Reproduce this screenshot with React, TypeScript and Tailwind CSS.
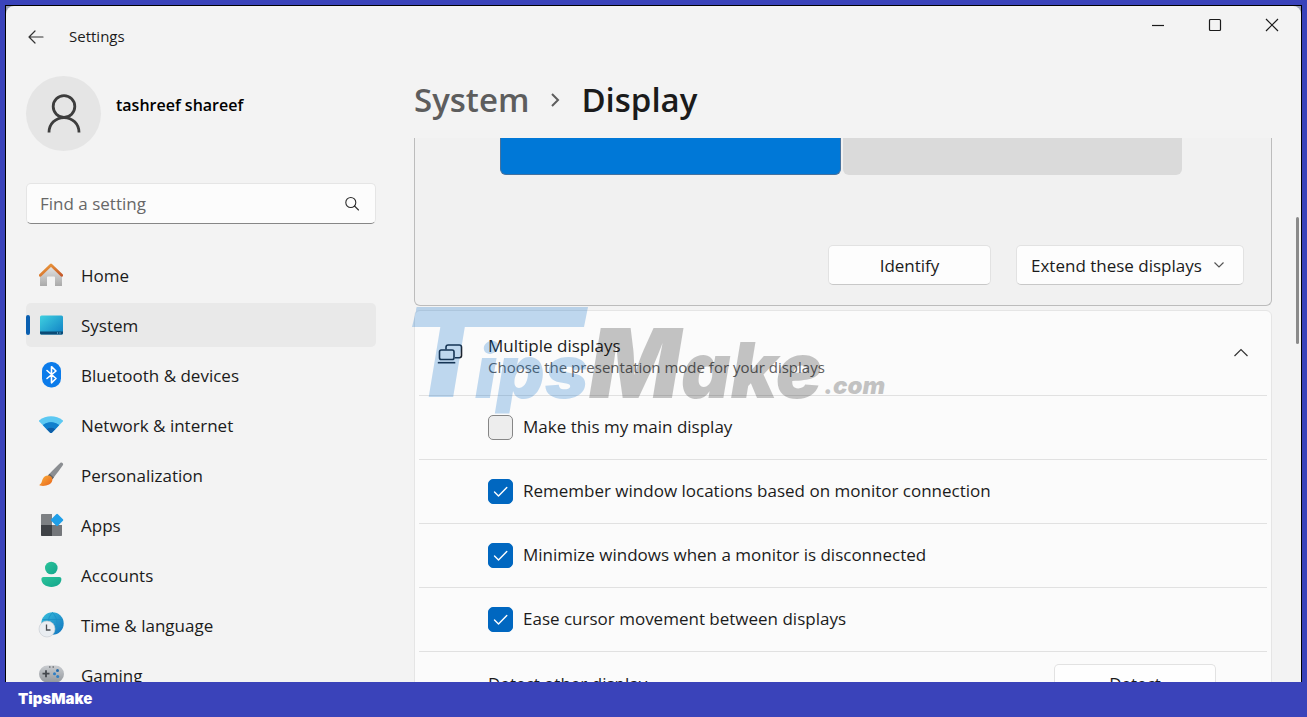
import React, { useState } from 'react';

interface NavItem {
  label: string;
  icon: React.ReactNode;
}

const HomeIcon = () => (
  <svg viewBox="0 0 24 24" className="h-6 w-6 shrink-0" aria-hidden="true">
    <defs>
      <linearGradient id="home-wall" x1="0" y1="0" x2="0" y2="1">
        <stop offset="0" stopColor="#e4e4e4" />
        <stop offset="1" stopColor="#a9a9a9" />
      </linearGradient>
      <linearGradient id="home-roof" x1="0" y1="0" x2="1" y2="1">
        <stop offset="0" stopColor="#f0a03c" />
        <stop offset="1" stopColor="#c5592a" />
      </linearGradient>
    </defs>
    <path d="M12 3.5 1 13v9.4c0 .4.2.6.6.6H8v-8.5c0-.6.3-.9.9-.9h6.2c.6 0 .9.3.9.9V23h6.4c.4 0 .6-.2.6-.6V13z" fill="url(#home-wall)" />
    <path d="M1.300 12.300 12 2l10.700 10.300" fill="none" stroke="url(#home-roof)" strokeWidth="2.800" strokeLinecap="round" strokeLinejoin="round" />
  </svg>
);

const SystemIcon = () => (
  <svg viewBox="0 0 24 24" className="h-6 w-6 shrink-0" aria-hidden="true">
    <defs>
      <linearGradient id="sys-screen" x1="0" y1="0" x2="1" y2="1">
        <stop offset="0" stopColor="#3fd0e0" />
        <stop offset="1" stopColor="#0f7fc4" />
      </linearGradient>
    </defs>
    <rect x="1" y="2.5" width="23" height="19" rx="1.5" fill="url(#sys-screen)" />
    <path d="M1 18.500h23V20c0 .9-.6 1.500-1.500 1.500h-20C1.600 21.500 1 20.900 1 20z" fill="#0b4a75" />
    <path d="M18 19.500h1v1h-1zM20.500 19.500h1v1h-1z" fill="#8fd3f0" />
  </svg>
);

const BluetoothIcon = () => (
  <svg viewBox="0 0 24 24" className="h-6 w-6 shrink-0 overflow-visible" aria-hidden="true">
    <rect x="3" y="-1" width="19" height="25.5" rx="9" fill="#0b7bea" />
    <path d="m8 7.500 9 8-4.500 4.300V3.700L17 8l-9 7.500" fill="none" stroke="#fff" strokeWidth="1.6" strokeLinejoin="round" strokeLinecap="round" />
  </svg>
);

const NetworkIcon = () => (
  <svg viewBox="0 0 24 24" className="h-6 w-6 shrink-0" aria-hidden="true">
    <path d="M.3 7.300C6.800 1.800 17.200 1.800 23.700 7.300c.4.4.4.8.1 1.200l-11 11.200c-.5.5-1.100.5-1.600 0L.2 8.500c-.3-.4-.3-.8.1-1.200z" fill="#5cc8f2" />
    <path d="M3.800 12.200c4.800-4 11.600-4 16.400 0l-7.400 7.500c-.5.5-1.100.5-1.600 0z" fill="#1b8ad3" />
    <path d="M7.500 16c2.700-2.100 6.300-2.100 9 0l-3.700 3.700c-.5.5-1.100.5-1.600 0z" fill="#0d5ea8" />
    <path d="M4.200 11.800c4.600-3.500 11-3.500 15.600 0L16.500 16c-2.700-2.100-6.300-2.100-9 0z" fill="#1180cd" />
  </svg>
);

const BrushIcon = () => (
  <svg viewBox="0 0 24 24" className="h-6 w-6 shrink-0 overflow-visible" aria-hidden="true">
    <defs>
      <linearGradient id="brush-tip" x1="0" y1="0" x2="1" y2="1">
        <stop offset="0" stopColor="#fbb03b" />
        <stop offset="1" stopColor="#e8641b" />
      </linearGradient>
    </defs>
    <path d="M21.500-.2c1.200-.8 3.100.6 2.600 2-.3.900-8.700 12-10.700 14.400L9 12.400C11.200 10 20.300.6 21.500-.2z" fill="#8b8e92" />
    <path d="m10.600 10.700 4.200 3.700-1.400 1.800L9 12.400z" fill="#5f6266" />
    <path d="M8.800 12.500c2.500-.2 5 2 4.600 4.500-.8 5-7.500 6.700-12.400 5.600-.6-.1-.7-.8-.2-1.100 2-1.100 1.900-3 2.800-5.200.9-2.300 2.900-3.600 5.200-3.800z" fill="url(#brush-tip)" />
  </svg>
);

const AppsIcon = () => (
  <svg viewBox="0 0 24 24" className="h-6 w-6 shrink-0 overflow-visible" aria-hidden="true">
    <path d="M2 2.200C2 1.500 2.300 1 3 1h10v11H2z" fill="#7d8083" />
    <path d="M2 12h11v11H3c-.7 0-1-.4-1-1z" fill="#3f4246" />
    <path d="M13 12h10v10c0 .6-.3 1-1 1h-9z" fill="#74777b" />
    <rect x="13.3" y="2.2" width="9.5" height="9.5" rx="1.2" transform="rotate(45 18 7)" fill="#1f9fe8" />
  </svg>
);

const AccountsIcon = () => (
  <svg viewBox="0 0 24 24" className="h-6 w-6 shrink-0 overflow-visible" aria-hidden="true">
    <defs>
      <linearGradient id="acc-green" x1="0" y1="0" x2="1" y2="1">
        <stop offset="0" stopColor="#2cc49a" />
        <stop offset="1" stopColor="#12a58c" />
      </linearGradient>
    </defs>
    <circle cx="12.3" cy="5" r="6.3" fill="url(#acc-green)" />
    <path d="M4.500 14h15.800c1.200 0 2.100.9 2.100 2.100 0 5-4.400 7.900-10 7.900s-10-2.900-10-7.900c0-1.200.9-2.100 2.100-2.100z" fill="url(#acc-green)" />
  </svg>
);

const TimeIcon = () => (
  <svg viewBox="0 0 24 24" className="h-6 w-6 shrink-0 overflow-visible" aria-hidden="true">
    <defs>
      <linearGradient id="time-globe" x1="0" y1="0" x2="1" y2="1">
        <stop offset="0" stopColor="#38c0dc" />
        <stop offset="1" stopColor="#1272bf" />
      </linearGradient>
    </defs>
    <circle cx="13.5" cy="10.5" r="11.2" fill="url(#time-globe)" />
    <path d="M3.500 6.500h20M3 13.500h21M13.500-.5c-6 6-6 16 0 22M13.500-.5c6 6 6 16 0 22" fill="none" stroke="#1b8fc4" strokeWidth=".8" />
    <circle cx="8" cy="16" r="8" fill="#e9edf1" stroke="#c5cad0" strokeWidth=".6" />
    <path d="M7.500 11.500v5.500h4" fill="none" stroke="#4a4d52" strokeWidth="1.3" />
  </svg>
);

const GamingIcon = () => (
  <svg viewBox="0 0 24 24" className="h-6 w-6 shrink-0 overflow-visible" aria-hidden="true">
    <defs>
      <linearGradient id="pad" x1="0" y1="0" x2="0" y2="1">
        <stop offset="0" stopColor="#c9ccd0" />
        <stop offset="1" stopColor="#94989d" />
      </linearGradient>
    </defs>
    <rect x="0" y="2.5" width="25" height="17" rx="8.5" fill="url(#pad)" />
    <path d="M7 7.200v7M3.500 10.700h7" stroke="#44484d" strokeWidth="1.8" />
    <circle cx="18.5" cy="7.500" r="1.5" fill="#2369a8" />
    <circle cx="15.5" cy="10.700" r="1.5" fill="#2f7fc4" />
    <circle cx="18.7" cy="13.500" r="1.5" fill="#2f7fc4" />
    <path d="M10 4h1.500M13.500 4H15" stroke="#44484d" strokeWidth="1.2" />
  </svg>
);

const navItems: NavItem[] = [
  { label: 'Home', icon: <HomeIcon /> },
  { label: 'System', icon: <SystemIcon /> },
  { label: 'Bluetooth & devices', icon: <BluetoothIcon /> },
  { label: 'Network & internet', icon: <NetworkIcon /> },
  { label: 'Personalization', icon: <BrushIcon /> },
  { label: 'Apps', icon: <AppsIcon /> },
  { label: 'Accounts', icon: <AccountsIcon /> },
  { label: 'Time & language', icon: <TimeIcon /> },
  { label: 'Gaming', icon: <GamingIcon /> },
];

const displayOptions = [
  { id: 'main-display', label: 'Make this my main display', checked: false },
  { id: 'remember', label: 'Remember window locations based on monitor connection', checked: true },
  { id: 'minimize', label: 'Minimize windows when a monitor is disconnected', checked: true },
  { id: 'ease-cursor', label: 'Ease cursor movement between displays', checked: true },
];

const TitleBar: React.FC = () => (
  <header className="flex shrink-0 items-start justify-between">
    <div className="flex h-[62px] items-center gap-6 pl-[21px]">
      <button type="button" aria-label="Back" className="text-[#333]">
        <svg viewBox="0 0 18 18" className="h-[18px] w-[18px]" fill="none" stroke="currentColor" strokeWidth="1.2">
          <path d="M16 9H2M8 3 2 9l6 6" strokeLinecap="round" strokeLinejoin="round" />
        </svg>
      </button>
      <span className="pb-[2px] text-[15px]">Settings</span>
    </div>
    <div className="flex h-[38px] pr-px text-[#1a1a1a]">
      <button type="button" aria-label="Minimize" className="flex w-[57px] items-center justify-center">
        <svg viewBox="0 0 14 14" className="h-[14px] w-[14px]" stroke="currentColor" strokeWidth="1.2">
          <path d="M1 7.500h12" />
        </svg>
      </button>
      <button type="button" aria-label="Maximize" className="flex w-[57px] items-center justify-center">
        <svg viewBox="0 0 14 14" className="h-[14px] w-[14px]" fill="none" stroke="currentColor" strokeWidth="1.2">
          <rect x="1.5" y="1.5" width="11" height="11" rx="1" />
        </svg>
      </button>
      <button type="button" aria-label="Close" className="flex w-[57px] items-center justify-center">
        <svg viewBox="0 0 14 14" className="h-[14px] w-[14px]" stroke="currentColor" strokeWidth="1.2">
          <path d="m1 1 12 12M13 1 1 13" />
        </svg>
      </button>
    </div>
  </header>
);

const Sidebar: React.FC = () => (
  <aside className="w-[370px] shrink-0 overflow-hidden pt-2 pl-5">
    <div className="flex items-start gap-[15px]">
      <div className="flex h-[75px] w-[75px] items-center justify-center rounded-full bg-[#e5e5e5]">
        <svg viewBox="0 0 36 40" className="h-10 w-9" fill="none" stroke="#3d3d3d" strokeWidth="2.8" aria-hidden="true">
          <circle cx="18" cy="12.500" r="10.800" />
          <path d="M3 38.500C3 30 9.500 23.600 18 23.600s15 6.400 15 14.900" />
        </svg>
      </div>
      <p className="mt-4 text-[16px] leading-[26px] font-semibold text-black">tashreef shareef</p>
    </div>

    <div className="mt-8 flex h-[41px] items-center rounded-[5px] border border-[#e5e5e5] border-b-[#868686] bg-[#fcfcfc] pr-[15px] pl-[13px]">
      <input
        type="text"
        aria-label="Find a setting"
        placeholder="Find a setting"
        className="min-w-0 flex-1 bg-transparent text-[17px] outline-none placeholder:text-[#676767]"
      />
      <svg viewBox="0 0 16 16" className="h-4 w-4" fill="none" stroke="#2b2b2b" strokeWidth="1.1" aria-hidden="true">
        <circle cx="6.8" cy="6.500" r="5" />
        <path d="m10.500 10 4 4" strokeLinecap="round" />
      </svg>
    </div>

    <nav className="mt-[29px] flex flex-col gap-[6px]">
      {navItems.map((item) => (
        <a
          key={item.label}
          href="#"
          className={
            item.label === 'System'
              ? 'relative flex h-11 items-center gap-[18px] rounded-[5px] bg-[#e9e9e9] pl-[13px] text-[17px]'
              : 'relative flex h-11 items-center gap-[18px] rounded-[5px] pl-[13px] text-[17px]'
          }
        >
          {item.label === 'System' && <span className="absolute left-0 h-5 w-1 rounded-full bg-[#0a5fb0]" />}
          {item.icon}
          <span className="pt-[2px]">{item.label}</span>
        </a>
      ))}
    </nav>
  </aside>
);

const ArrangePanel: React.FC = () => (
  <section className="rounded-b-[6px] border border-t-0 border-[#bcbcbc] bg-[#f1f1f1]">
    <div className="flex h-[37px] gap-[2px] pr-[89px] pl-[85px]">
      <div className="flex-1 rounded-b-[6px] border border-t-0 border-[#4472a0] bg-[#0078d7]" />
      <div className="flex-1 rounded-b-[6px] bg-[#dadada]" />
    </div>
    <div className="mt-[70px] mb-5 flex justify-end gap-[25px] pr-[27px]">
      <button type="button" className="h-10 w-[163px] rounded-[5px] border border-[#e2e2e2] border-b-[#c8c8c8] bg-[#fdfdfd] pt-[2px] text-[17px]">
        Identify
      </button>
      <div className="relative">
        <select
          aria-label="Display mode"
          className="h-10 w-[228px] appearance-none rounded-[5px] border border-[#e2e2e2] border-b-[#c8c8c8] bg-[#fdfdfd] pt-[2px] pl-[14px] text-[17px]"
        >
          <option>Extend these displays</option>
          <option>Duplicate these displays</option>
        </select>
        <svg viewBox="0 0 12 12" className="pointer-events-none absolute top-[14px] right-[19px] h-3 w-3" fill="none" stroke="#555" strokeWidth="1.2" aria-hidden="true">
          <path d="m1.500 3.500 4.500 4.500 4.500-4.500" />
        </svg>
      </div>
    </div>
  </section>
);

const MultipleDisplays: React.FC = () => {
  const [options, setOptions] = useState(displayOptions);

  const toggle = (id: string) => {
    setOptions(options.map((o) => (o.id === id ? { ...o, checked: !o.checked } : o)));
  };

  return (
    <section className="mt-1 rounded-t-[6px] border border-[#e5e5e5] bg-[#fbfbfb] pb-4">
      <button type="button" aria-expanded="true" className="flex h-[84px] w-full items-center pr-[22px] pl-[22px] text-left">
        <svg viewBox="0 0 26 20" className="mt-[2px] mr-[25px] h-5 w-[26px]" fill="none" stroke="#1c2430" strokeWidth="1.6" aria-hidden="true">
          <path d="M9 5.500V3.200C9 1.900 9.900 1 11.200 1h11.100c1.300 0 2.200.9 2.200 2.200v8.300c0 1.300-.9 2.200-2.200 2.200H18" />
          <rect x="2.5" y="6" width="14.5" height="9.5" rx="1.8" />
          <path d="M.8 18.700h17.500" />
        </svg>
        <span className="mt-[5px] flex flex-1 flex-col">
          <span className="text-[17px] leading-[22px]">Multiple displays</span>
          <span className="text-[15px] leading-5 text-[#5f5f5f]">Choose the presentation mode for your displays</span>
        </span>
        <svg viewBox="0 0 16 16" className="h-4 w-4" fill="none" stroke="#333" strokeWidth="1.2" aria-hidden="true">
          <path d="m1.500 11 6.500-6.500 6.500 6.500" />
        </svg>
      </button>
      {options.map((option) => (
        <div key={option.id} className="mx-1 flex h-16 items-center gap-[10px] border-t border-[#e1e1e1] pl-[69px]">
          <span className="relative h-[25px] w-[25px]">
            <input
              id={option.id}
              type="checkbox"
              checked={option.checked}
              onChange={() => toggle(option.id)}
              className="block h-[25px] w-[25px] appearance-none rounded-[5px] border border-[#868686] bg-[#ededed] checked:border-[#0067c0] checked:bg-[#0067c0]"
            />
            {option.checked && (
              <svg viewBox="0 0 25 25" className="pointer-events-none absolute inset-0 h-[25px] w-[25px]" fill="none" stroke="#fff" strokeWidth="1.4" aria-hidden="true">
                <path d="m6.500 13 4 4 8.300-8.500" strokeLinecap="round" strokeLinejoin="round" />
              </svg>
            )}
          </span>
          <label htmlFor={option.id} className="pb-[2px] text-[17px]">
            {option.label}
          </label>
        </div>
      ))}
      <div className="mx-1 flex h-16 items-center justify-between border-t border-[#e1e1e1] pr-[51px] pl-[69px]">
        <span className="text-[17px]">Detect other display</span>
        <button type="button" className="h-10 w-[162px] rounded-[5px] border border-[#e2e2e2] border-b-[#c8c8c8] bg-[#fefefe] text-[17px]">
          Detect
        </button>
      </div>
    </section>
  );
};

const Watermark: React.FC = () => (
  <div className="pointer-events-none absolute top-[238px] left-0 h-[104px] w-[480px] font-[Inter] leading-none font-black italic opacity-24" aria-hidden="true">
    <svg viewBox="0 0 176 20" className="absolute top-px left-[-2px] h-5 w-[176px]" fill="#0068c8">
      <path d="M5 0h171l-4 20H0z" />
    </svg>
    <span className="absolute top-[-16px] left-[-10px] text-[124px] text-[#0068c8]">T</span>
    <span className="absolute top-[28px] left-[61px] text-[74px] text-[#0068c8]">ips</span>
    <span className="absolute top-[9px] left-[175px] text-[96px] text-[#101010]">M</span>
    <span className="absolute top-[26px] left-[267px] text-[77px] text-[#101010]">ake</span>
    <span className="absolute top-[68px] left-[410px] text-[24px] text-[#101010]">.com</span>
  </div>
);

const App: React.FC = () => {
  return (
    <div className="flex h-screen flex-col bg-[#3a43ba] px-[5px] pt-[5px] font-['Open_Sans',sans-serif] text-[#1b1b1b]">
      <div className="min-h-0 flex-1 border border-b-0 border-black bg-[#9aa0b4]">
        <div className="relative flex h-full flex-col rounded-t-[8px] bg-[#f3f3f3]">
          <TitleBar />
          <div className="flex min-h-0 flex-1">
            <Sidebar />
            <main className="relative mr-[29px] ml-[38px] flex min-w-0 flex-1 flex-col">
              <h1 className="flex h-[70px] shrink-0 items-center pb-[6px] text-[33px] font-semibold">
                <a href="#" className="text-[#5d5d5d]">System</a>
                <svg viewBox="0 0 12 18" className="mx-5 h-[18px] w-3" fill="none" stroke="#5d5d5d" strokeWidth="2" aria-hidden="true">
                  <path d="m3 3 6 6-6 6" />
                </svg>
                <span>Display</span>
              </h1>
              <div className="min-h-0 flex-1 overflow-hidden">
                <ArrangePanel />
                <MultipleDisplays />
              </div>
              <Watermark />
            </main>
          </div>
          <div className="absolute top-[211px] right-[2px] h-[127px] w-[3px] rounded-full bg-[#8a8a8a]" />
        </div>
      </div>
      <footer className="flex h-[35px] shrink-0 items-center pl-[13px] font-[Inter] text-[15px] font-black text-white">TipsMake</footer>
    </div>
  );
};

export default App;
